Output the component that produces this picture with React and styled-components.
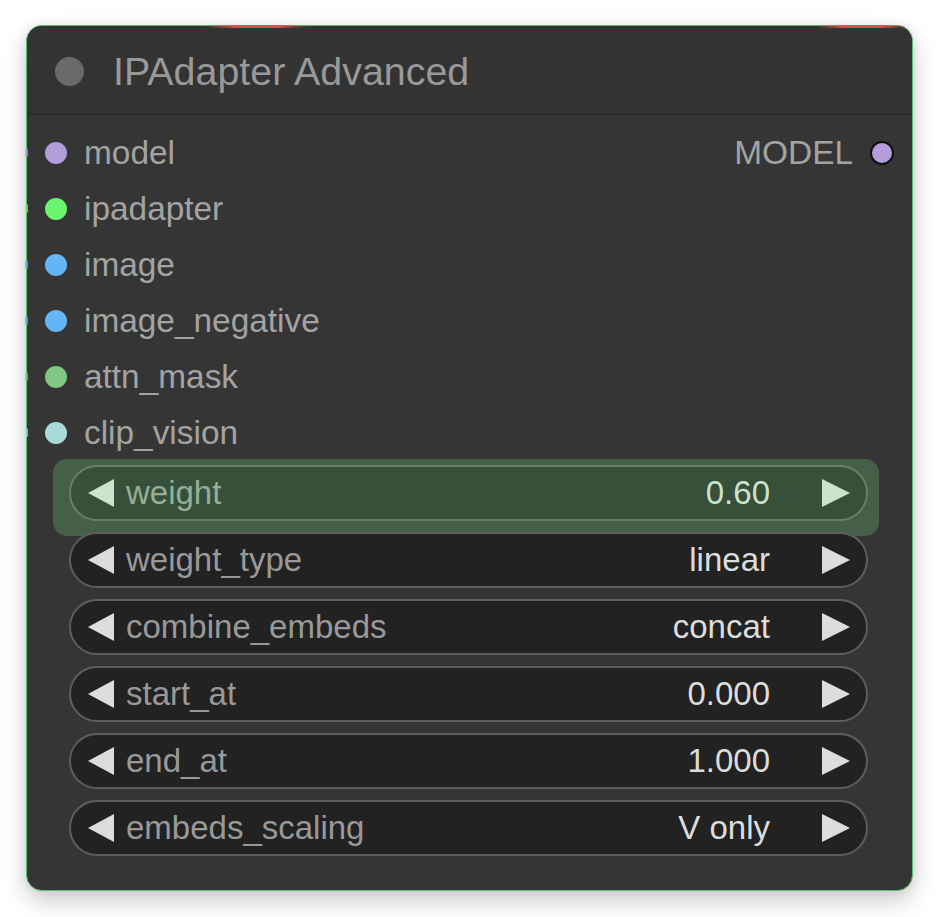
import React from 'react'
import styled, { createGlobalStyle, css } from 'styled-components'

const GlobalStyle = createGlobalStyle`
  html, body {
    margin: 0;
    background: #ffffff;
  }
  body {
    font-family: 'Liberation Sans', Arial, sans-serif;
  }
`

const Page = styled.div`
  padding: 25px 26px 27px 26px;
`

const Node = styled.div`
  position: relative;
  width: 887px;
  height: 866px;
  box-sizing: border-box;
  background: #353535;
  border: 1px solid #55c070;
  border-radius: 16px;
  box-shadow: 0 10px 24px rgba(0, 0, 0, 0.2), 0 0 10px rgba(0, 0, 0, 0.08);
  display: flex;
  flex-direction: column;
`

// red link glows on the top edge
const Glow = styled.div`
  position: absolute;
  top: -1px;
  height: 3px;
  left: ${p => p.left}px;
  width: ${p => p.width}px;
  border-radius: 2px;
  background: linear-gradient(90deg, rgba(230, 80, 80, 0), rgba(230, 80, 80, 0.9) 30%, rgba(230, 80, 80, 0.9) 70%, rgba(230, 80, 80, 0));
`

const TitleBar = styled.div`
  height: 89px;
  box-sizing: border-box;
  padding: 3px 0 0 28px;
  display: flex;
  align-items: center;
  gap: 29px;
  border-bottom: 2px solid #2b2b2b;
  background: #333333;
  border-radius: 15px 15px 0 0;
`

const TitleDot = styled.span`
  width: 29px;
  height: 29px;
  border-radius: 50%;
  background: #6a6a6a;
`

const Title = styled.h1`
  margin: 0;
  font-size: 39.4px;
  font-weight: 400;
  color: #999999;
`

const Slots = styled.div`
  padding-top: 10px;
  display: flex;
  flex-direction: column;
`

const SlotRow = styled.div`
  position: relative;
  height: 56px;
  display: flex;
  align-items: center;
  justify-content: space-between;
  padding: 0 18px 0 18px;
`

const Stub = styled.span`
  position: absolute;
  left: -2px;
  top: 50%;
  width: 3px;
  height: 9px;
  margin-top: -5px;
  border-radius: 2px;
  background: ${p => p.color};
  opacity: 0.75;
`

const Slot = styled.div`
  display: flex;
  align-items: center;
  gap: 17px;
`

const Dot = styled.span`
  width: 22px;
  height: 22px;
  border-radius: 50%;
  background: ${p => p.color};
  ${p => p.outlined && css`
    width: 20px;
    height: 20px;
    border: 2px solid #0e0e0e;
  `}
`

const SlotLabel = styled.span`
  font-size: 33.4px;
  color: #a3a3a3;
`

const Widgets = styled.div`
  margin: 4px 44px 0 42px;
  display: flex;
  flex-direction: column;
  gap: 11px;
`

const Widget = styled.div`
  position: relative;
  height: 56px;
  box-sizing: border-box;
  border: 2px solid #5e5e5e;
  border-radius: 28px;
  background: #222222;
  display: flex;
  align-items: center;
  padding: 0 16px 0 17px;
  ${p => p.active && css`
    &::after {
      content: '';
      position: absolute;
      left: -18px;
      right: -13px;
      top: -8px;
      bottom: -17px;
      border-radius: 14px;
      background: rgba(134, 253, 148, 0.21);
      pointer-events: none;
    }
  `}
`

const Arrow = styled.span`
  width: 0;
  height: 0;
  border-top: 14px solid transparent;
  border-bottom: 14px solid transparent;
  ${p => p.dir === 'left'
    ? css`border-right: 26px solid #dddddd;`
    : css`border-left: 28px solid #dddddd;`}
`

const WidgetLabel = styled.span`
  flex: 1;
  margin-left: 12px;
  font-size: 33px;
  color: #999999;
`

const WidgetValue = styled.span`
  margin-right: 52px;
  font-size: 33px;
  color: #dddddd;
`

const inputs = [
  { name: 'model', color: '#b39ddb' },
  { name: 'ipadapter', color: '#6cf56f' },
  { name: 'image', color: '#64b5f6' },
  { name: 'image_negative', color: '#64b5f6' },
  { name: 'attn_mask', color: '#81c784' },
  { name: 'clip_vision', color: '#a8dadc' },
]

const widgets = [
  { name: 'weight', value: '0.60', active: true },
  { name: 'weight_type', value: 'linear' },
  { name: 'combine_embeds', value: 'concat' },
  { name: 'start_at', value: '0.000' },
  { name: 'end_at', value: '1.000' },
  { name: 'embeds_scaling', value: 'V only' },
]

export default function App() {
  return (
    <Page>
      <GlobalStyle />
      <Node>
        <Glow left={180} width={100} />
        <Glow left={790} width={90} />
        <TitleBar>
          <TitleDot />
          <Title>IPAdapter Advanced</Title>
        </TitleBar>
        <Slots>
          {inputs.map((input, i) => (
            <SlotRow key={input.name}>
              <Stub color={input.color} />
              <Slot>
                <Dot color={input.color} />
                <SlotLabel>{input.name}</SlotLabel>
              </Slot>
              {i === 0 && (
                <Slot>
                  <SlotLabel>MODEL</SlotLabel>
                  <Dot color="#b39ddb" outlined />
                </Slot>
              )}
            </SlotRow>
          ))}
        </Slots>
        <Widgets>
          {widgets.map(w => (
            <Widget key={w.name} active={w.active}>
              <Arrow dir="left" />
              <WidgetLabel>{w.name}</WidgetLabel>
              <WidgetValue>{w.value}</WidgetValue>
              <Arrow dir="right" />
            </Widget>
          ))}
        </Widgets>
      </Node>
    </Page>
  )
}
